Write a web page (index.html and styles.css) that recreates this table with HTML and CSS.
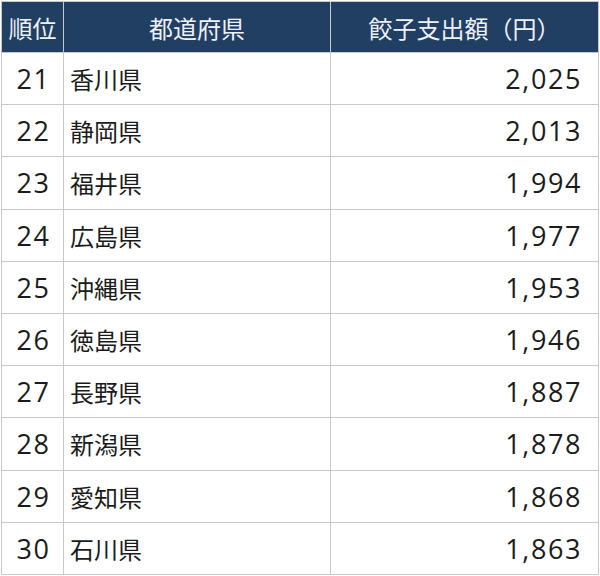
FILE: index.html
```html
<!DOCTYPE html>
<html lang="ja">
<head>
<meta charset="utf-8">
<link rel="stylesheet" href="styles.css">
</head>
<body>
<table class="rank">
  <thead>
    <tr><th class="c-rank">順位</th><th class="c-pref">都道府県</th><th class="c-amt">餃子支出額（円）</th></tr>
  </thead>
  <tbody>
    <tr><td class="c-rank">21</td><td class="c-pref">香川県</td><td class="c-amt">2,025</td></tr>
    <tr><td class="c-rank">22</td><td class="c-pref">静岡県</td><td class="c-amt">2,013</td></tr>
    <tr><td class="c-rank">23</td><td class="c-pref">福井県</td><td class="c-amt">1,994</td></tr>
    <tr><td class="c-rank">24</td><td class="c-pref">広島県</td><td class="c-amt">1,977</td></tr>
    <tr><td class="c-rank">25</td><td class="c-pref">沖縄県</td><td class="c-amt">1,953</td></tr>
    <tr><td class="c-rank">26</td><td class="c-pref">徳島県</td><td class="c-amt">1,946</td></tr>
    <tr><td class="c-rank">27</td><td class="c-pref">長野県</td><td class="c-amt">1,887</td></tr>
    <tr><td class="c-rank">28</td><td class="c-pref">新潟県</td><td class="c-amt">1,878</td></tr>
    <tr><td class="c-rank">29</td><td class="c-pref">愛知県</td><td class="c-amt">1,868</td></tr>
    <tr><td class="c-rank">30</td><td class="c-pref">石川県</td><td class="c-amt">1,863</td></tr>
  </tbody>
</table>
</body>
</html>
```
FILE: styles.css
```css
html, body {
  margin: 0;
  padding: 0;
  background: #ffffff;
}
body {
  padding: 1px 1px 0 1px;
}
.rank {
  border-collapse: collapse;
  width: 598px;
  table-layout: fixed;
  font-family: "Noto Sans CJK JP", sans-serif;
  font-size: 24px;
  color: #1b1b1b;
}
.rank th, .rank td {
  border: 1px solid #c9c9c9;
  padding: 0;
  vertical-align: middle;
}
.rank th {
  background: #213e63;
  color: #eef1f5;
  font-weight: normal;
  height: 50px;
  text-align: center;
}
.rank td {
  height: 51.2px;
}
.c-rank { width: 61px; }
.c-pref { width: 266px; }
td.c-rank, td.c-amt {
  font-family: "Open Sans", "Noto Sans", sans-serif;
  font-size: 27px;
  letter-spacing: 1.6px;
}
td.c-rank {
  text-align: center;
  padding-left: 2px;
}
td.c-pref {
  text-align: left;
  padding-left: 6px;
}
td.c-amt {
  text-align: right;
  padding-right: 16px;
}
```
